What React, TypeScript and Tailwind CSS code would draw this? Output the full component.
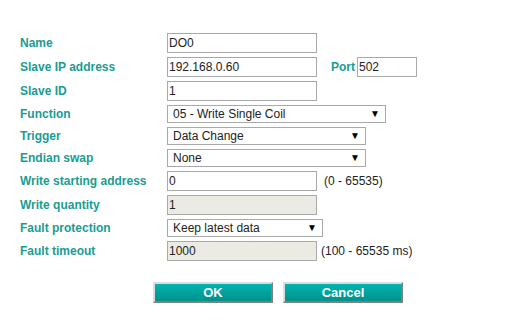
import React from "react";

const labelCls =
  "w-[167px] shrink-0 pl-[20px] text-[12px] font-bold text-[#1a9c93] leading-none";

const inputCls =
  "h-[20px] border border-[#a9a9a9] px-[1px] text-[12px] text-[#222] outline-none";

const Row: React.FC<{ label: string; children: React.ReactNode }> = (props) => {
  return (
    <div className="flex flex-row items-center">
      <div className={labelCls}>{props.label}</div>
      {props.children}
    </div>
  );
};

const Select: React.FC<{ value: string; width: string }> = (props) => {
  return (
    <div
      className={`${props.width} h-[18px] border border-[#a9a9a9] bg-white flex flex-row items-center justify-between pl-[5px] pr-[5px] text-[12px] text-[#222]`}
    >
      <span>{props.value}</span>
      <span className="text-[10px] leading-none text-black">▼</span>
    </div>
  );
};

const App: React.FC = () => {
  return (
    <div className="w-[510px] h-[333px] bg-white font-['Liberation_Sans',Arial,sans-serif]">
      <div className="flex flex-col gap-[4px] pt-[33px]">
        <Row label="Name">
          <input className={`${inputCls} w-[150px]`} defaultValue="DO0" />
        </Row>
        <Row label="Slave IP address">
          <input className={`${inputCls} w-[150px]`} defaultValue="192.168.0.60" />
          <span className="ml-[14px] mr-[2px] text-[12px] font-bold text-[#1a9c93]">Port</span>
          <input className={`${inputCls} w-[60px]`} defaultValue="502" />
        </Row>
        <Row label="Slave ID">
          <input className={`${inputCls} w-[150px]`} defaultValue="1" />
        </Row>
        <Row label="Function">
          <Select value="05 - Write Single Coil" width="w-[219px]" />
        </Row>
        <Row label="Trigger">
          <Select value="Data Change" width="w-[199px]" />
        </Row>
        <Row label="Endian swap">
          <Select value="None" width="w-[199px]" />
        </Row>
        <Row label="Write starting address">
          <input className={`${inputCls} w-[150px]`} defaultValue="0" />
          <span className="ml-[7px] text-[12px] text-[#222]">(0 - 65535)</span>
        </Row>
        <Row label="Write quantity">
          <input
            className={`${inputCls} w-[150px] bg-[#ebebe4]`}
            defaultValue="1"
            disabled
          />
        </Row>
        <Row label="Fault protection">
          <Select value="Keep latest data" width="w-[156px]" />
        </Row>
        <Row label="Fault timeout">
          <input
            className={`${inputCls} w-[150px] bg-[#ebebe4]`}
            defaultValue="1000"
            disabled
          />
          <span className="ml-[4px] text-[12px] text-[#222]">(100 - 65535 ms)</span>
        </Row>
      </div>
      <div className="flex flex-row gap-[10px] pl-[153px] mt-[21px]">
        <button className="w-[120px] h-[21px] border-2 border-t-[#dcdcdc] border-l-[#dcdcdc] border-b-[#808080] border-r-[#808080] bg-linear-to-b from-[#00b5b0] to-[#00918c] text-white text-[13px] font-bold leading-none">
          OK
        </button>
        <button className="w-[120px] h-[21px] border-2 border-t-[#dcdcdc] border-l-[#dcdcdc] border-b-[#808080] border-r-[#808080] bg-linear-to-b from-[#00b5b0] to-[#00918c] text-white text-[13px] font-bold leading-none">
          Cancel
        </button>
      </div>
    </div>
  );
};

export default App;
